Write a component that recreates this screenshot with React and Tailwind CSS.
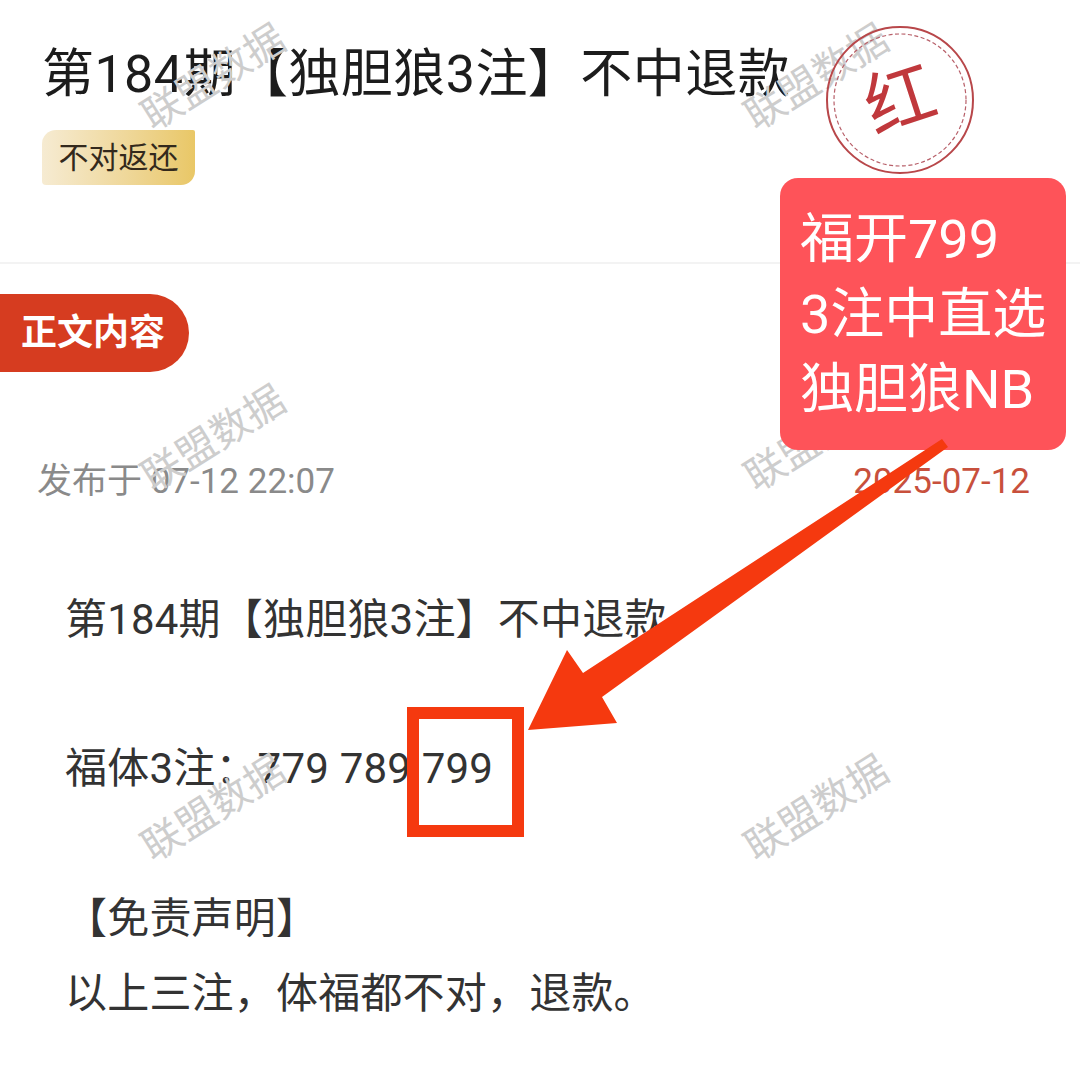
import React from 'react';

const FONT = "font-['Roboto','Noto_Sans_CJK_SC',sans-serif]";

const marks = [
  'left-[124px] top-[50px]',
  'left-[727px] top-[50px]',
  'left-[124px] top-[411px]',
  'left-[727px] top-[411px]',
  'left-[124px] top-[781px]',
  'left-[727px] top-[781px]',
];

function Watermark({ className }) {
  return (
    <span className={`absolute ${className} w-[180px] text-center text-[40px] leading-[56px] whitespace-nowrap text-[#cdcdcd] -rotate-[32deg]`}>
      联盟数据
    </span>
  );
}

function Stamp() {
  return (
    <div className="absolute left-[825px] top-[25px] w-[150px] h-[150px] flex items-center justify-center">
      <svg className="absolute inset-0" width="150" height="150" viewBox="0 0 150 150" fill="none">
        <circle cx="75" cy="75" r="73" stroke="#b8474a" strokeWidth="2" />
        <circle cx="75" cy="75" r="66" stroke="#b8606a" strokeWidth="1.2" strokeDasharray="4 2.5" />
      </svg>
      <span className="text-[70px] leading-none text-[#c0383c] -rotate-[18deg]">红</span>
    </div>
  );
}

export default function App() {
  return (
    <div className={`relative w-[1080px] h-[1091px] overflow-hidden bg-white ${FONT}`}>
      {/* header */}
      <div className="h-[264px] pt-[43px] pl-[42px] border-b-2 border-[#f3f3f3]">
        <h1 className="text-[52px] leading-[64px] tracking-[0.45px] font-normal text-[#1c1c1c] whitespace-nowrap">第184期【独胆狼3注】不中退款</h1>
        <div className="mt-[23px] w-[153px] h-[55px] flex items-center justify-center rounded-tl-[14px] rounded-br-[14px] rounded-tr-[2px] rounded-bl-[4px] bg-gradient-to-r from-[#f6ebd2] to-[#e9c766] text-[30px] text-[#33291c]">
          不对返还
        </div>
      </div>

      {/* body */}
      <div className="pt-[30px]">
        <div className="w-[189px] h-[78px] pl-[21px] flex items-center rounded-r-[39px] bg-[#d63c20] text-[36px] font-bold text-white">
          正文内容
        </div>
        <div className="mt-[88px] pl-[37px] pr-[50px] flex justify-between text-[35px] leading-[44px]">
          <span className="text-[#8a8a8a]">发布于 07-12 22:07</span>
          <span className="text-[#c8503c]">2025-07-12</span>
        </div>
        <div className="mt-[78px] pl-[65px] text-[42px] leading-[75px] tracking-[0.2px] text-[#333333] whitespace-nowrap">
          <p>第184期【独胆狼3注】不中退款</p>
          <p className="mt-[74px]">福体3注：779 789 799</p>
          <p className="mt-[75px]">【免责声明】</p>
          <p>以上三注，体福都不对，退款。</p>
        </div>
      </div>

      {marks.map((m) => (
        <Watermark key={m} className={m} />
      ))}

      <Stamp />

      {/* highlight box */}
      <div className="absolute left-[407px] top-[707px] w-[117px] h-[130px] border-[12px] border-[#f5390f]" />

      {/* callout */}
      <div className="absolute left-[780px] top-[178px] w-[286px] h-[272px] pt-[24px] pl-[20px] rounded-[18px] bg-[#fe5359] text-[54px] leading-[75px] text-white whitespace-nowrap">
        <p>福开799</p>
        <p>3注中直选</p>
        <p>独胆狼NB</p>
      </div>

      {/* arrow */}
      <svg className="absolute inset-0" width="1080" height="1091" viewBox="0 0 1080 1091">
        <polygon points="528,730 567,650 583,673 942,439 948,447 602,697 617,723" fill="#f5390f" />
      </svg>
    </div>
  );
}
